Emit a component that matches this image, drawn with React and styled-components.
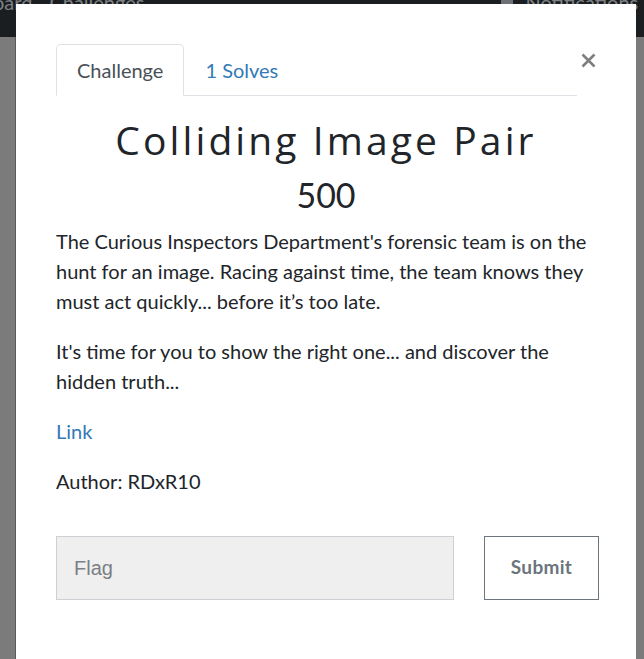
import React from "react";
import styled, { createGlobalStyle } from "styled-components";

const GlobalStyle = createGlobalStyle`
  html, body { margin: 0; padding: 0; }
  body {
    background: #7b7b7b;
    font-family: Lato, "Liberation Sans", sans-serif;
    overflow: hidden;
  }
  * { box-sizing: border-box; }
`;

const Page = styled.div`
  width: 644px;
  height: 659px;
  background: #7b7b7b;
  position: relative;
  overflow: hidden;
`;

const NavBar = styled.div`
  height: 37px;
  background: #1b1e21;
  display: flex;
  align-items: flex-start;
  font-family: Lato, sans-serif;
  font-size: 20px;
  color: #7e8184;
  line-height: 1;
`;

const NavText = styled.span`
  display: block;
  margin-top: -8px;
  margin-left: ${(p) => p.$ml}px;
`;

const NavSquare = styled.span`
  display: block;
  width: 12px;
  height: 5px;
  background: #6e7175;
  margin-left: ${(p) => p.$ml}px;
`;

const Backdrop = styled.div`
  position: absolute;
  left: 15px;
  top: 37px;
  width: 1px;
  height: 622px;
  background: #5a5a5a;
`;

const Modal = styled.div`
  position: absolute;
  left: 16px;
  top: 4px;
  width: 620px;
  height: 700px;
  background: #ffffff;
  padding: 40px 40px;
  color: #212529;
`;

const Header = styled.div`
  display: flex;
  align-items: flex-start;
  gap: 2px;
`;

const Tabs = styled.div`
  width: 525px;
  display: flex;
  border-bottom: 1px solid #dee2e6;
`;

const Tab = styled.div`
  padding: 10px 20px;
  font-size: 20px;
  line-height: 30px;
  margin-bottom: -1px;
  border: 1px solid ${(p) => (p.$active ? "#dee2e6" : "transparent")};
  border-bottom-color: ${(p) => (p.$active ? "#ffffff" : "transparent")};
  border-radius: 5px 5px 0 0;
  color: ${(p) => (p.$active ? "#495057" : "#337ab7")};
  background: ${(p) => (p.$active ? "#ffffff" : "transparent")};
`;

const Close = styled.div`
  margin-top: 8px;
  margin-left: 1px;
  width: 16px;
  height: 16px;
  display: flex;
  align-items: center;
  justify-content: center;
`;

const Title = styled.h2`
  margin: 0 0 10px;
  padding-top: 20px;
  text-align: center;
  font-family: "Open Sans", Lato, sans-serif;
  font-weight: 400;
  font-size: 39px;
  line-height: 48px;
  letter-spacing: 3.1px;
  color: #212529;
`;

const Value = styled.h3`
  margin: 0 0 10px;
  text-align: center;
  font-weight: 400;
  font-size: 34px;
  line-height: 42px;
  color: #212529;
`;

const Description = styled.div`
  width: 540px;
  font-size: 20px;
  line-height: 30px;
  color: #212529;
`;

const Para = styled.p`
  margin: 0 0 20px;
`;

const Link = styled.a`
  color: #337ab7;
  text-decoration: none;
`;

const FlagRow = styled.div`
  margin-top: 40px;
  display: flex;
  align-items: stretch;
  gap: 30px;
`;

const FlagInput = styled.input`
  width: 398px;
  height: 64px;
  flex: none;
  background: #efefef;
  border: 1px solid #cdd1d6;
  border-radius: 0;
  padding: 0 17px;
  font-family: "Liberation Sans", Arial, sans-serif;
  font-size: 20px;
  color: #495057;
  outline: none;
  &::placeholder { color: #7a7f85; }
`;

const SubmitButton = styled.button`
  width: 115px;
  height: 64px;
  flex: none;
  background: #fff;
  border: 1px solid #6c757d;
  border-radius: 0;
  font-family: Lato, sans-serif;
  font-weight: 700;
  font-size: 19px;
  color: #6c757d;
  padding: 0 0 4px;
  letter-spacing: 0.3px;
`;

export default function App() {
  return (
    <Page>
      <GlobalStyle />
      <NavBar>
        <NavText $ml={-7}>oard</NavText>
        <NavText $ml={17}>Challenges</NavText>
        <NavSquare $ml={357} />
        <NavText $ml={12}>Notifications</NavText>
      </NavBar>
      <Backdrop />
      <Modal>
        <Header>
          <Tabs>
            <Tab $active>Challenge</Tab>
            <Tab>1 Solves</Tab>
          </Tabs>
          <Close>
            <svg width="15" height="15" viewBox="0 0 15 15">
              <path d="M1.5 1.5 L13.5 13.5 M13.5 1.5 L1.5 13.5" stroke="#7f7f7f" strokeWidth="2.6" strokeLinecap="butt" />
            </svg>
          </Close>
        </Header>
        <Title>Colliding Image Pair</Title>
        <Value>500</Value>
        <Description>
          <Para>
            The Curious Inspectors Department's forensic team is on the hunt for an image. Racing against time, the team knows they must act quickly... before it’s too late.
          </Para>
          <Para>It's time for you to show the right one... and discover the hidden truth...</Para>
          <Para>
            <Link href="#">Link</Link>
          </Para>
          <Para>Author: RDxR10</Para>
        </Description>
        <FlagRow>
          <FlagInput placeholder="Flag" />
          <SubmitButton>Submit</SubmitButton>
        </FlagRow>
      </Modal>
    </Page>
  );
}
